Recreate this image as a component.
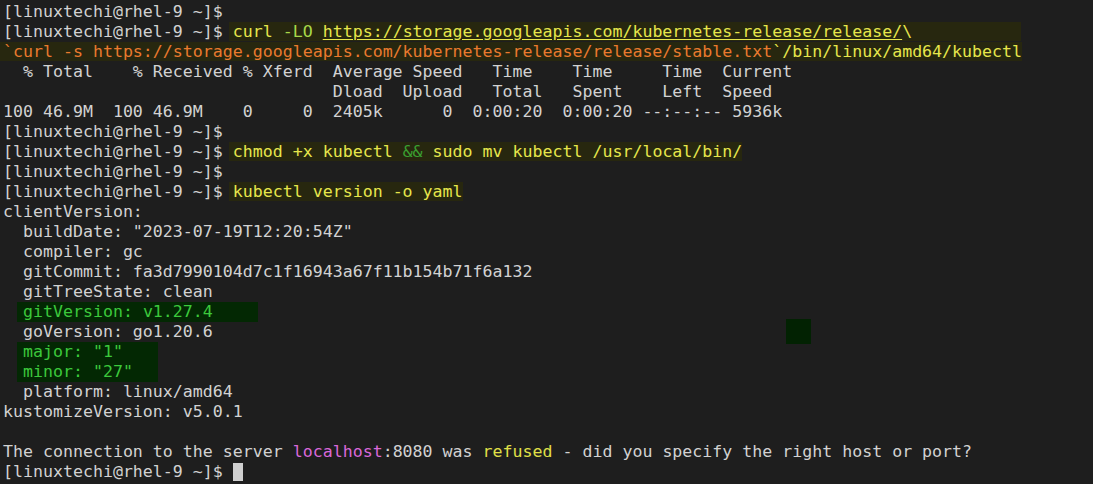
import React from "react";

const PROMPT = "[linuxtechi@rhel-9 ~]$ ";

function Line({ children }: { children?: React.ReactNode }) {
  return <div className="h-[20px]">{children}</div>;
}

function Cmd({ children, className = "" }: { children: React.ReactNode; className?: string }) {
  // marker-style highlight that the screenshot has behind typed commands
  return <span className={"-ml-[4px] bg-[#27270f] pl-[4px] " + className}>{children}</span>;
}

export default function App() {
  return (
    <div className="h-[484px] w-[1093px] overflow-hidden whitespace-pre bg-[#1e1e1e] pl-[3px] pt-[2px] font-['DejaVu_Sans_Mono','Liberation_Mono',monospace] text-[16.6px] leading-[20px] text-[#d2d2d2]">
      <Line>{PROMPT.trimEnd()}</Line>
      <Line>
        {PROMPT}
        <Cmd className="pr-[109px]">
          <span className="text-[#e6e64c]">curl </span>
          <span className="text-[#a8d84a]">-LO </span>
          <span className="text-[#e6e64c] underline underline-offset-[2px]">
            https://storage.googleapis.com/kubernetes-release/release/
          </span>
          <span className="text-[#e6e64c]">\</span>
        </Cmd>
      </Line>
      <Line>
        <span className="-ml-[3px] bg-[#27270f] pl-[3px]">
          <span className="text-[#ea7a2e]">
            `curl -s https://storage.googleapis.com/kubernetes-release/release/stable.txt
          </span>
          <span className="text-[#e6e64c]">`/bin/linux/amd64/kubectl</span>
        </span>
      </Line>
      <Line>{"  % Total    % Received % Xferd  Average Speed   Time    Time     Time  Current"}</Line>
      <Line>{"                                 Dload  Upload   Total   Spent    Left  Speed"}</Line>
      <Line>{"100 46.9M  100 46.9M    0     0  2405k      0  0:00:20  0:00:20 --:--:-- 5936k"}</Line>
      <Line>{PROMPT.trimEnd()}</Line>
      <Line>
        {PROMPT}
        <Cmd>
          <span className="text-[#e6e64c]">chmod +x kubectl </span>
          <span className="text-[#3a9e30]">&amp;&amp;</span>
          <span className="text-[#e6e64c]"> sudo mv kubectl /usr/local/bin/</span>
        </Cmd>
      </Line>
      <Line>{PROMPT.trimEnd()}</Line>
      <Line>
        {PROMPT}
        <Cmd>
          <span className="text-[#e6e64c]">kubectl version -o yaml</span>
        </Cmd>
      </Line>
      <Line>clientVersion:</Line>
      <Line>{'  buildDate: "2023-07-19T12:20:54Z"'}</Line>
      <Line>{"  compiler: gc"}</Line>
      <Line>{"  gitCommit: fa3d7990104d7c1f16943a67f11b154b71f6a132"}</Line>
      <Line>{"  gitTreeState: clean"}</Line>
      <div className="ml-[14px] h-[20px] w-[241px] bg-[#032803] pl-[6px] text-[#3cc83c]">gitVersion: v1.27.4</div>
      <Line>
        {"  goVersion: go1.20.6"}
        <span className="-mb-[3px] -mt-[3px] ml-[573px] inline-block h-[25px] w-[25px] bg-[#022202] align-top" />
      </Line>
      <div className="ml-[14px] w-[141px] bg-[#032803] pl-[6px] text-[#3cc83c]">
        <div className="h-[20px]">major: "1"</div>
        <div className="h-[20px]">minor: "27"</div>
      </div>
      <Line>{"  platform: linux/amd64"}</Line>
      <Line>kustomizeVersion: v5.0.1</Line>
      <Line />
      <Line>
        {"The connection to the server "}
        <span className="text-[#d968d9]">localhost</span>
        {":8080 was "}
        <span className="text-[#e0e048]">refused</span>
        {" - did you specify the right host or port?"}
      </Line>
      <Line>
        {PROMPT}
        <span className="mt-[1px] inline-block h-[18px] w-[10px] bg-[#cfcfcf] align-top" />
      </Line>
    </div>
  );
}
